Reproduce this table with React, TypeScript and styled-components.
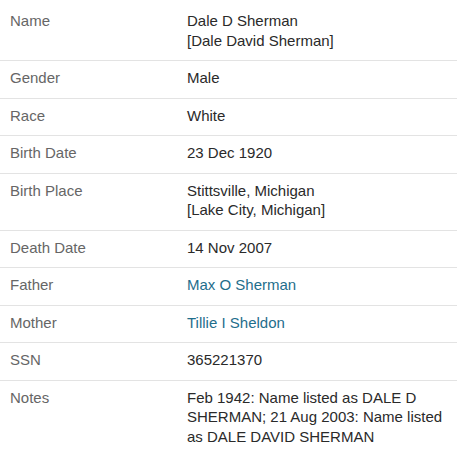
import React from "react";
import styled, { createGlobalStyle } from "styled-components";

const Global = createGlobalStyle`
  html, body { margin: 0; padding: 0; background: #fff; }
  body { font-family: "Liberation Sans", Arial, sans-serif; }
`;

const Table = styled.div`
  display: flex;
  flex-direction: column;
  padding-top: 4px;
  width: 457px;
`;

const Row = styled.div<{ $last?: boolean }>`
  display: grid;
  grid-template-columns: 187px 1fr;
  border-bottom: ${(p) => (p.$last ? "none" : "1px solid #e3e3e3")};
  padding: 7px 6px 10px 0;
  font-size: 15px;
  line-height: 19.5px;
`;

const Label = styled.div`
  color: #666;
  padding-left: 10px;
`;

const Value = styled.div`
  color: #2a2a2a;
`;

const Link = styled.a`
  color: #1f6e8c;
  text-decoration: none;
`;

type Item = { label: string; lines?: string[]; link?: string };

const items: Item[] = [
  { label: "Name", lines: ["Dale D Sherman", "[Dale David Sherman]"] },
  { label: "Gender", lines: ["Male"] },
  { label: "Race", lines: ["White"] },
  { label: "Birth Date", lines: ["23 Dec 1920"] },
  { label: "Birth Place", lines: ["Stittsville, Michigan", "[Lake City, Michigan]"] },
  { label: "Death Date", lines: ["14 Nov 2007"] },
  { label: "Father", link: "Max O Sherman" },
  { label: "Mother", link: "Tillie I Sheldon" },
  { label: "SSN", lines: ["365221370"] },
  {
    label: "Notes",
    lines: ["Feb 1942: Name listed as DALE D SHERMAN; 21 Aug 2003: Name listed as DALE DAVID SHERMAN"],
  },
];

export default function App() {
  return (
    <>
      <Global />
      <Table>
        {items.map((it, i) => (
          <Row key={it.label} $last={i === items.length - 1}>
            <Label>{it.label}</Label>
            <Value>
              {it.link ? (
                <Link href="#">{it.link}</Link>
              ) : (
                it.lines!.map((l, j) => <div key={j}>{l}</div>)
              )}
            </Value>
          </Row>
        ))}
      </Table>
    </>
  );
}
